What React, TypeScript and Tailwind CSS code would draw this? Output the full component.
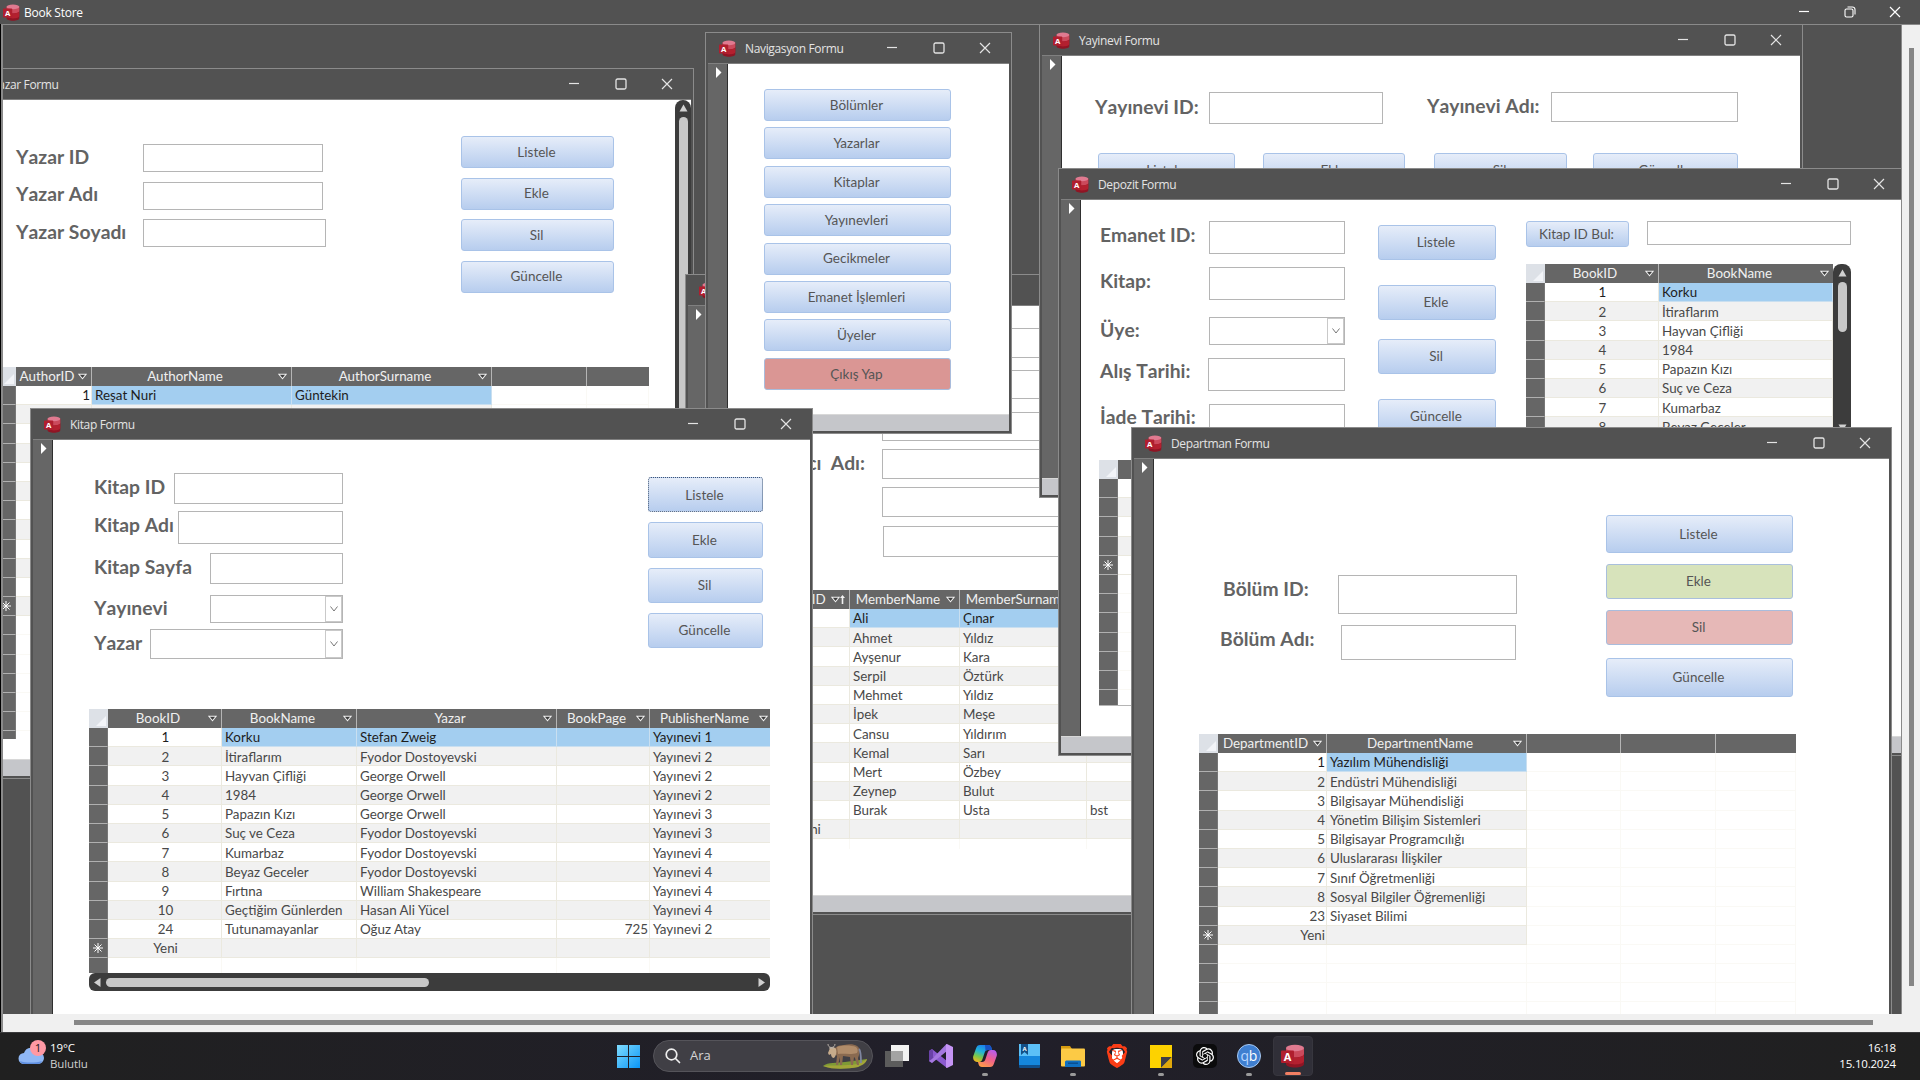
import React from "react";
import { SiBrave, SiOpenai } from "react-icons/si";

const AccessIcon = ({ size = 17 }: { size?: number }) => (
  <svg width={size} height={size} viewBox="0 0 24 24" className="shrink-0">
    <path d="M5 4v16c0 2 4 3.500 9 3.500s9-1.500 9-3.500V4z" fill="#8f1524" />
    <path d="M5 4v6c0 2 4 3.500 9 3.500s9-1.500 9-3.500V4z" fill="#cb4a5c" />
    <path d="M5 17c0 1.500 4 3.400 9 3.400s9-1.400 9-3.400v-7c0 2-4 3.400-9 3.400S5 12 5 10z" fill="#b3202f" />
    <ellipse cx="14" cy="4" rx="9" ry="3.300" fill="#e07a90" />
    <rect x="0" y="6.500" width="13" height="12.500" rx="1" fill="#b01e2e" />
    <text x="6.500" y="16.600" fill="#fff" fontSize="11" fontWeight="700" fontFamily="Open Sans, sans-serif" textAnchor="middle">A</text>
  </svg>
);

const Minimize = () => (
  <svg width="12" height="12" viewBox="0 0 12 12"><path d="M1 5.500h10" stroke="currentColor" strokeWidth="1.200" /></svg>
);
const Maximize = () => (
  <svg width="12" height="12" viewBox="0 0 12 12"><rect x="1" y="1" width="10" height="10" rx="1.500" fill="none" stroke="currentColor" strokeWidth="1.300" /></svg>
);
const Restore = () => (
  <svg width="12" height="12" viewBox="0 0 12 12" fill="none" stroke="currentColor" strokeWidth="1.100"><rect x="1" y="3" width="8" height="8" rx="1.500" /><path d="M3.500 1h5a2.500 2.500 0 0 1 2.500 2.500v5" /></svg>
);
const Close = () => (
  <svg width="12" height="12" viewBox="0 0 12 12"><path d="M1 1l10 10M11 1L1 11" stroke="currentColor" strokeWidth="1.200" /></svg>
);

function Win({ title, className, strip = true, bottomBar = true, children }: { title: string; className: string; strip?: boolean; bottomBar?: boolean; children?: React.ReactNode }) {
  return (
    <section className={`absolute flex flex-col border border-[#8b8b8b] bg-[#525252] px-[2px] pb-[2px] ${className}`}>
      <header className="flex h-[30px] shrink-0 items-center pl-[11px] pr-[18px] text-[#e4e4e4]">
        <AccessIcon />
        <span className="ml-[9px] flex-1 whitespace-nowrap pt-px font-['Open_Sans',sans-serif] text-[12px] tracking-[-0.350px]">{title}</span>
        <span className="flex gap-[34.500px]"><Minimize /><Maximize /><Close /></span>
      </header>
      <div className="flex min-h-0 flex-1 overflow-hidden border-t border-[#808080]">
        {strip && (
          <div className="w-5 shrink-0 border-r border-[#2f2f2f] bg-[#666]">
            <svg width="6" height="11" viewBox="0 0 6 11" className="ml-2 mt-[3px]"><path d="M0 0l5.500 5.500L0 11z" fill="#fff" /></svg>
          </div>
        )}
        <div className="flex min-w-0 flex-1 overflow-hidden bg-white">{children}</div>
      </div>
      {bottomBar && <div className="h-[17px] shrink-0 border-t border-[#d8d8d8] bg-[#c5c6ca]" />}
    </section>
  );
}

function Btn({ children, className = "", tone = "border-[#a9c3e8] bg-linear-to-b from-[#e6edf9] to-[#b7cdee]" }: { children: React.ReactNode; className?: string; tone?: string }) {
  return (
    <button className={`flex shrink-0 items-center justify-center rounded-[3px] border pr-[2px] font-['Lato',sans-serif] text-[13.500px] text-[#555] ${tone} ${className}`}>{children}</button>
  );
}

const Label = ({ children, className = "" }: { children: React.ReactNode; className?: string }) => (
  <label className={`whitespace-pre pb-[3px] font-['Lato',sans-serif] text-[19.300px] font-bold leading-none text-[#636363] [font-kerning:none] ${className}`}>{children}</label>
);

const Box = ({ className = "", combo = false }: { className?: string; combo?: boolean }) => (
  <div className={`flex shrink-0 justify-end border border-[#b5b5b5] bg-white ${className}`}>
    {combo && (
      <span className="flex w-[17px] items-center justify-center border border-[#c9c9c9]">
        <svg width="8" height="6" viewBox="0 0 8 6"><path d="M.5.5L4 5 7.500.5" fill="none" stroke="#777" /></svg>
      </span>
    )}
  </div>
);

const Field = ({ label, row, box, combo, labelClass = "" }: { label: string; row: string; box: string; combo?: boolean; labelClass?: string }) => (
  <div className={`flex shrink-0 items-center justify-between ${row}`}>
    <Label className={labelClass}>{label}</Label>
    <Box className={box} combo={combo} />
  </div>
);

type Col = { label?: string; w: string; align?: string; sorted?: boolean };

function Sheet({ cols, rows, dataCols, blank = 0, star = true, className = "" }: { cols: Col[]; rows: string[][]; dataCols: number; blank?: number; star?: boolean; className?: string }) {
  const all = [...rows, ...Array.from({ length: blank }, () => [] as string[])];
  return (
    <div className={`flex shrink-0 flex-col overflow-hidden font-['Lato',sans-serif] text-[13.400px] text-[#484848] ${className}`}>
      <div className="flex h-[19px] shrink-0 bg-[#666] text-[#f0f0f0]">
        <div className="flex w-[19px] shrink-0 items-end justify-end bg-[#dde1e7] p-[2px]">
          <svg width="10" height="10" viewBox="0 0 10 10"><path d="M10 0v10H0z" fill="#f2f4f8" /></svg>
        </div>
        {cols.map((c, i) => (
          <div key={i} className={`flex shrink-0 items-center border-r border-[#b5b5b5] pr-[4px] last:border-r-0 ${c.w}`}>
            <span className="flex-1 whitespace-nowrap text-center">{c.label}</span>
            {c.label && (
              <svg width="9" height="7" viewBox="0 0 10 7" className="shrink-0"><path d="M1 1h8L5 6z" fill="#3d3d3d" stroke="#f0f0f0" strokeWidth="1.200" /></svg>
            )}
            {c.sorted && (
              <svg width="5" height="9" viewBox="0 0 5 9" className="shrink-0"><path d="M2.500 0L5 3H0zM1.700 3h1.600v6H1.700z" fill="#f0f0f0" /></svg>
            )}
          </div>
        ))}
      </div>
      {all.map((r, ri) => {
        const data = ri < rows.length;
        const isStar = star && ri === rows.length - 1;
        return (
          <div key={ri} className="flex h-[19.200px] shrink-0">
            <div className="flex w-[19px] shrink-0 items-center justify-center border-b border-r border-b-[#b0b0b0] border-r-[#777] bg-[#666]">
              {isStar && (
                <svg width="10" height="10" viewBox="0 0 10 10"><path d="M5 0v10M0 5h10M1.500 1.500l7 7M8.500 1.500l-7 7" stroke="#fff" strokeWidth="1" /></svg>
              )}
            </div>
            {cols.map((c, ci) => {
              const inData = data && ci < dataCols;
              const bg = !inData ? "border-[#faf9f5]" : ri === 0 && ci > 0 ? "bg-[#a3cef0] border-[#c9dff0]" : ri % 2 ? "bg-[#f1f1f1] border-[#ebe9df]" : "bg-white border-[#ebe9df]";
              return (
                <div key={ci} className={`flex shrink-0 items-center overflow-hidden whitespace-nowrap border-b border-r pl-[3px] pr-px pt-[2px] leading-none ${ri === 0 ? "text-[#1d1d1d]" : ""} ${bg} ${c.align ?? ""} ${c.w}`}>{r[ci] ?? ""}</div>
              );
            })}
          </div>
        );
      })}
    </div>
  );
}

const books: string[][] = [
  ["1", "Korku", "Stefan Zweig", "", "Yayınevi 1"],
  ["2", "İtiraflarım", "Fyodor Dostoyevski", "", "Yayınevi 2"],
  ["3", "Hayvan Çifliği", "George Orwell", "", "Yayınevi 2"],
  ["4", "1984", "George Orwell", "", "Yayınevi 2"],
  ["5", "Papazın Kızı", "George Orwell", "", "Yayınevi 3"],
  ["6", "Suç ve Ceza", "Fyodor Dostoyevski", "", "Yayınevi 3"],
  ["7", "Kumarbaz", "Fyodor Dostoyevski", "", "Yayınevi 4"],
  ["8", "Beyaz Geceler", "Fyodor Dostoyevski", "", "Yayınevi 4"],
  ["9", "Fırtına", "William Shakespeare", "", "Yayınevi 4"],
  ["10", "Geçtiğim Günlerden", "Hasan Ali Yücel", "", "Yayınevi 4"],
  ["24", "Tutunamayanlar", "Oğuz Atay", "725", "Yayınevi 2"],
  ["Yeni"],
];
const members: string[][] = [
  ["", "Ali", "Çınar"], ["", "Ahmet", "Yıldız"], ["", "Ayşenur", "Kara"], ["", "Serpil", "Öztürk"], ["", "Mehmet", "Yıldız"], ["", "İpek", "Meşe"],
  ["", "Cansu", "Yıldırım"], ["", "Kemal", "Sarı"], ["", "Mert", "Özbey"], ["", "Zeynep", "Bulut"], ["", "Burak", "Usta", "bst"], ["Yeni"],
];
const departments: string[][] = [
  ["1", "Yazılım Mühendisliği"], ["2", "Endüstri Mühendisliği"], ["3", "Bilgisayar Mühendisliği"], ["4", "Yönetim Bilişim Sistemleri"], ["5", "Bilgisayar Programcılığı"],
  ["6", "Uluslararası İlişkiler"], ["7", "Sınıf Öğretmenliği"], ["8", "Sosyal Bilgiler Öğremenliği"], ["23", "Siyaset Bilimi"], ["Yeni"],
];
const center = "justify-center";
const right = "justify-end";

const UpArrow = () => <svg width="9" height="8" viewBox="0 0 9 8" className="shrink-0"><path d="M4.500.5L8.500 7.500H.5z" fill="#d0d0d0" /></svg>;

const AuthorWindow = () => (
  <Win title="Yazar Formu" className="-left-[51px] top-[43px] h-[711px] w-[742px]">
    <div className="flex flex-1 flex-col">
      <div className="flex h-[267px] shrink-0">
        <div className="ml-[41px] mt-[44px] flex flex-col gap-[9.500px]">
          <Field label="Yazar ID" row="w-[307px] h-[28px]" box="h-[28px] w-[180px]" />
          <Field label="Yazar Adı" row="w-[307px] h-[28px]" box="h-[28px] w-[180px]" />
          <Field label="Yazar Soyadı" row="w-[310px] h-[28px]" box="h-[28px] w-[183px]" />
        </div>
        <div className="ml-[135px] mt-[36px] flex flex-col gap-[9.500px]">
          {["Listele", "Ekle", "Sil", "Güncelle"].map((t) => <Btn key={t} className="h-[32px] w-[153px]">{t}</Btn>)}
        </div>
      </div>
      <Sheet className="ml-[22px] h-[372px] w-[652px]" dataCols={3} blank={7}
        cols={[{ label: "AuthorID", w: "w-[76px]", align: right }, { label: "AuthorName", w: "w-[200px]" }, { label: "AuthorSurname", w: "w-[200px]" }, { w: "w-[95px]" }, { w: "w-[62px]" }]}
        rows={[["1", "Reşat Nuri", "Güntekin"], ...Array.from({ length: 10 }, () => ["", "", ""]), [""]]} />
    </div>
    <div className="flex w-4 shrink-0 flex-col items-center rounded-t-lg bg-[#3c3c3c] pt-1">
      <UpArrow />
      <div className="mt-[5px] h-[500px] w-[9px] rounded-full bg-[#c8c8c8]" />
    </div>
  </Win>
);

const MemberWindow = () => (
  <Win title="Üye Formu" className="left-[682px] top-[249px] h-[641px] w-[600px]">
    <div className="flex flex-1 flex-col">
      <div className="flex h-[284px] shrink-0 flex-col pt-[22px]">
        <Box className="ml-[174px] h-[30px] w-[230px]" />
        <Box className="ml-[174px] mt-[12px] h-[29px] w-[230px]" />
        <Box className="ml-[174px] mt-[13px] h-[29px] w-[230px]" />
        <div className="mt-[8px] flex items-center">
          <div className="flex w-[174px] justify-end pr-[17px]"><Label>{"Kullanıcı  Adı:"}</Label></div>
          <Box className="h-[30px] w-[230px]" />
        </div>
        <Box className="ml-[174px] mt-[8px] h-[30px] w-[230px]" />
        <Box className="ml-[175px] mt-[9px] h-[31px] w-[229px]" />
      </div>
      <Sheet className="ml-[30px] h-[259px]" dataCols={4} blank={1}
        cols={[{ label: "MemberID", w: "w-[93px]", align: "justify-center pl-[12px]", sorted: true }, { label: "MemberName", w: "w-[110px]" }, { label: "MemberSurname", w: "w-[127px]" }, { label: "UserName", w: "w-[100px]" }]}
        rows={members} />
    </div>
  </Win>
);

const PublisherWindow = () => (
  <Win title="Yayinevi Formu" className="left-[1036px] -top-px h-[474px] w-[764px]">
    <div className="flex flex-1 flex-col">
      <div className="flex items-start pt-[36px]">
        <Field label="Yayınevi ID:" row="ml-[33px] h-[32px] w-[288px]" box="h-[32px] w-[174px]" />
        <Field label="Yayınevi Adı:" row="ml-[44px] h-[30px] w-[311px]" box="h-[30px] w-[187px]" />
      </div>
      <div className="mt-[29px] flex pl-[36px]">
        <Btn className="h-[34px] w-[137px]">Listele</Btn>
        <Btn className="ml-[28px] h-[34px] w-[142px]">Ekle</Btn>
        <Btn className="ml-[29px] h-[34px] w-[133px]">Sil</Btn>
        <Btn className="ml-[26px] h-[34px] w-[145px]">Güncelle</Btn>
      </div>
    </div>
  </Win>
);

const NavigationWindow = () => (
  <Win title="Navigasyon Formu" className="left-[702px] top-[7px] h-[402px] w-[307px]">
    <div className="flex flex-col gap-[6.400px] pl-[36px] pt-[25px]">
      {["Bölümler", "Yazarlar", "Kitaplar", "Yayınevleri", "Gecikmeler", "Emanet İşlemleri", "Üyeler"].map((t) => <Btn key={t} className="h-[32px] w-[187px]">{t}</Btn>)}
      <Btn className="h-[32px] w-[187px]" tone="border-[#a9bcdc] bg-[#da9694]">Çıkış Yap</Btn>
    </div>
  </Win>
);

const DepositWindow = () => (
  <Win title="Depozit Formu" className="left-[1055px] top-[143px] h-[588px] w-[848px]">
    <div className="flex flex-1 flex-col">
      <div className="flex h-[260px] shrink-0">
        <div className="ml-[19px] flex flex-col pt-[21px]">
          <Field label="Emanet ID:" row="h-[33px] w-[245px]" box="h-[33px] w-[136px]" labelClass="-mt-[2px]" />
          <Field label="Kitap:" row="mt-[13px] h-[33px] w-[245px]" box="h-[33px] w-[136px]" labelClass="-mt-[2px]" />
          <Field label="Üye:" row="mt-[17px] h-[28px] w-[245px]" box="h-[28px] w-[136px]" combo />
          <Field label="Alış Tarihi:" row="mt-[13px] h-[33px] w-[245px]" box="h-[33px] w-[137px]" labelClass="-mt-[5px]" />
          <Field label="İade Tarihi:" row="mt-[13px] h-[33px] w-[245px]" box="h-[33px] w-[136px]" labelClass="-mt-[5px]" />
        </div>
        <div className="ml-[33px] flex flex-col pt-[25px]">
          <Btn className="h-[35px] w-[118px]">Listele</Btn>
          <Btn className="mt-[25px] h-[35px] w-[118px]">Ekle</Btn>
          <Btn className="mt-[19px] h-[35px] w-[118px]">Sil</Btn>
          <Btn className="mt-[25px] h-[35px] w-[118px]">Güncelle</Btn>
        </div>
        <div className="ml-[30px] flex flex-col pt-[21px]">
          <div className="flex">
            <Btn className="h-[26px] w-[103px]">Kitap ID Bul:</Btn>
            <Box className="ml-[18px] h-[24px] w-[204px]" />
          </div>
          <div className="mt-[17px] flex">
            <Sheet className="h-[180px]" dataCols={2} star={false}
              cols={[{ label: "BookID", w: "w-[114px]", align: center }, { label: "BookName", w: "w-[174px]" }]}
              rows={books.slice(0, 9).map((b) => b.slice(0, 2))} />
            <div className="flex w-[18px] flex-col items-center rounded-t-lg bg-[#3c3c3c] pt-[5px]">
              <UpArrow />
              <div className="mt-[5px] h-[50px] w-[9px] rounded-full bg-[#c8c8c8]" />
              <svg width="9" height="8" viewBox="0 0 9 8" className="mt-[92px]"><path d="M.5.500h8L4.500 7.500z" fill="#d0d0d0" /></svg>
            </div>
          </div>
        </div>
      </div>
      <Sheet className="ml-[18px] h-[246px] w-[660px] border-b border-[#b5b5b5]" dataCols={2} blank={8}
        cols={[{ w: "w-[120px]" }, { w: "w-[520px]" }]}
        rows={[["", ""], ["", ""], ["", ""], ["", ""], ["", ""]]} />
    </div>
  </Win>
);

const BookWindow = () => (
  <Win title="Kitap Formu" bottomBar={false} className="left-[27px] top-[383px] h-[700px] w-[783px]">
    <div className="flex flex-1 flex-col">
      <div className="flex h-[269px] shrink-0 justify-between pl-[41px] pr-[47px]">
        <div className="flex flex-col pt-[33px]">
          <Field label="Kitap ID" row="h-[31px] w-[249px]" box="h-[31px] w-[169px]" />
          <Field label="Kitap Adı" row="mt-[7px] h-[33px] w-[249px]" box="h-[33px] w-[165px]" labelClass="-mt-[3px]" />
          <Field label="Kitap Sayfa" row="mt-[9px] h-[31px] w-[249px]" box="h-[31px] w-[133px]" />
          <Field label="Yayınevi" row="mt-[11px] h-[28px] w-[249px]" box="h-[28px] w-[133px]" combo />
          <Field label="Yazar" row="mt-[6px] h-[30px] w-[249px]" box="h-[30px] w-[193px]" combo />
        </div>
        <div className="flex flex-col gap-[10px] pt-[37px]">
          <Btn className="h-[35.300px] w-[115px]" tone="border-dotted border-[#3f5676] bg-linear-to-b from-[#e6edf9] to-[#b7cdee]">Listele</Btn>
          {["Ekle", "Sil", "Güncelle"].map((t) => <Btn key={t} className="h-[35.300px] w-[115px]">{t}</Btn>)}
        </div>
      </div>
      <Sheet className="ml-[36px] h-[264px] w-[681px]" dataCols={5} blank={1}
        cols={[{ label: "BookID", w: "w-[114px]", align: center }, { label: "BookName", w: "w-[135px]" }, { label: "Yazar", w: "w-[200px]" }, { label: "BookPage", w: "w-[93px]", align: right }, { label: "PublisherName", w: "w-[122px]" }]}
        rows={books} />
      <div className="ml-[36px] flex h-[18px] w-[681px] shrink-0 items-center rounded-l-md rounded-r-md bg-[#3c3c3c] px-[5px]">
        <svg width="7" height="9" viewBox="0 0 7 9"><path d="M6.500 0v9L0 4.500z" fill="#d0d0d0" /></svg>
        <div className="ml-[5px] h-[9px] w-[323px] rounded-full bg-[#c8c8c8]" />
        <svg width="7" height="9" viewBox="0 0 7 9" className="ml-auto"><path d="M.5 0v9L7 4.500z" fill="#d0d0d0" /></svg>
      </div>
    </div>
  </Win>
);

const DepartmentWindow = () => (
  <Win title="Departman Formu" bottomBar={false} className="left-[1128px] top-[402px] h-[700px] w-[761px]">
    <div className="flex flex-1 flex-col">
      <div className="flex h-[275px] shrink-0 justify-between pr-[96px]">
        <div className="flex flex-col pl-[66px] pt-[116px]">
          <Field label="Bölüm ID:" row="ml-[3px] h-[39px] w-[294px]" box="h-[39px] w-[179px]" labelClass="-mt-[9px]" />
          <Field label="Bölüm Adı:" row="mt-[11px] h-[35px] w-[296px]" box="h-[35px] w-[175px]" labelClass="-mt-[5px]" />
        </div>
        <div className="flex flex-col pt-[56px]">
          <Btn className="h-[38px] w-[187px]">Listele</Btn>
          <Btn className="mt-[11px] h-[35px] w-[187px]" tone="border-[#a9bfdc] bg-[#d7e3bb]">Ekle</Btn>
          <Btn className="mt-[11px] h-[35px] w-[187px]" tone="border-[#a9bcdc] bg-[#e6b8b7]">Sil</Btn>
          <Btn className="mt-[13px] h-[39px] w-[187px]">Güncelle</Btn>
        </div>
      </div>
      <Sheet className="ml-[45px] h-[290px] w-[597px]" dataCols={2} blank={5}
        cols={[{ label: "DepartmentID", w: "w-[109px]", align: right }, { label: "DepartmentName", w: "w-[200px]" }, { w: "w-[94px]" }, { w: "w-[95px]" }, { w: "w-[80px]" }]}
        rows={departments} />
    </div>
  </Win>
);

const TaskItem = ({ children, dot }: { children: React.ReactNode; dot?: boolean }) => (
  <div className="relative flex h-[46px] w-[44px] items-center justify-center">
    {children}
    {dot && <span className="absolute bottom-[3px] h-[3px] w-[6px] rounded-full bg-[#9a9a9a]" />}
  </div>
);

const Wildebeest = () => (
  <svg width="46" height="26" viewBox="0 0 46 26">
    <path d="M1 23c5-4 14-3 22-4s15-2 22-3c-1 4-5 6-9 8-10 2-25 3-35-1z" fill="#7f9a35" />
    <path d="M1 23c8-1 22 0 35-2l9-5c-1 5-5 6-9 8-10 2-25 3-35-1z" fill="#b9ae3c" opacity=".6" />
    <path d="M13 5c2-2 5-3 9-3 5-1 10-1 13 1 3 2 3 6 2 9l-1 3 1 7h-2l-2-7-1-1-1 8h-2l-1-8-7-1-1 9h-2v-8l-2 8h-2l1-9c-2-2-3-4-3-8z" fill="#8a6a50" />
    <path d="M15 4c5-2 14-2 19 0 2 2 2 4 1 6-7 2-13 0-19 1z" fill="#b08c6a" />
    <path d="M8 5c2-1 5-1 6 1 1 3 0 7-2 9-2 0-3-2-3-4l-2 1-1-2z" fill="#c6ab8b" />
    <path d="M6 1c0 2 1 3 3 3.500 2 0 4-1 4-3.500M7 5h5" stroke="#b8b0a8" strokeWidth="1" fill="none" />
    <path d="M37 6c2 2 2 8 2 14" stroke="#7f86a0" strokeWidth="1.800" fill="none" />
  </svg>
);

const Taskbar = () => (
  <footer className="flex h-[48px] shrink-0 items-center border-t border-[#3b3b3d] bg-linear-to-r from-[#202020] via-[#211f2a] to-[#202020] pb-px font-['Open_Sans',sans-serif]">
    <div className="flex w-[606px] items-center pl-[18px]">
      <svg width="30" height="28" viewBox="0 0 30 28" className="-mt-[6px]">
        <path d="M6 25a5.500 5.500 0 0 1 0-11 7.500 7.500 0 0 1 14-1 6 6 0 0 1 0 12z" fill="#8fb7f5" />
        <path d="M2 22c5 2 16 2 22 0-1 2-2 3-4 3H6c-2 0-3-1-4-3z" fill="#5f8fe0" />
        <circle cx="20" cy="9" r="8" fill="#ff99a4" />
        <text x="20" y="13" fontSize="11.500" textAnchor="middle" fill="#1a1a1a" fontFamily="Open Sans, sans-serif">1</text>
      </svg>
      <div className="ml-[2px] flex flex-col text-[11.500px] leading-[16px] tracking-[-0.100px]">
        <span className="text-white">19°C</span>
        <span className="text-[#cfcfcf]">Bulutlu</span>
      </div>
    </div>
    <TaskItem>
      <svg width="23" height="23" viewBox="0 0 23 23">
        <defs><linearGradient id="win" x1="0" y1="0" x2="1" y2="1"><stop offset="0" stopColor="#7fdcff" /><stop offset="1" stopColor="#0a95f5" /></linearGradient></defs>
        <path d="M0 0h11v11H0zM12 0h11v11H12zM0 12h11v11H0zM12 12h11v11H12z" fill="url(#win)" />
      </svg>
    </TaskItem>
    <div className="ml-[3px] mr-[2px] flex h-[32px] w-[220px] items-center rounded-full border border-[#55545a] bg-[#403f45] pl-[11px] pr-[4px]">
      <svg width="16" height="16" viewBox="0 0 16 16" fill="none" stroke="#eee" strokeWidth="1.700"><circle cx="6.500" cy="6.500" r="5.300" /><path d="M10.500 10.500l4 4" strokeLinecap="round" /></svg>
      <span className="ml-[9px] flex-1 text-[13px] text-[#d5d5d5]">Ara</span>
      <Wildebeest />
    </div>
    <TaskItem>
      <svg width="24" height="24" viewBox="0 0 24 24"><rect x="6" y="1" width="18" height="16" fill="#f2f2f2" /><rect x="0" y="7" width="18" height="16" fill="#5c5c5c" /><rect x="6" y="7" width="12" height="10" fill="#a3a3a3" /></svg>
    </TaskItem>
    <TaskItem>
      <svg width="24" height="24" viewBox="0 0 24 24">
        <path d="M0 7l3-2 15 12v7L3 12.500 0 17z" fill="#8c5bd0" />
        <path d="M0 7l3-2 1 2v10l-1 2-3-2z" fill="#6a42a8" />
        <path d="M3 19l-3-2 3-2L17 .5 18 0v7z" fill="#a578e0" />
        <path d="M18 0l6 3v18l-6 3-1-.5V.5z" fill="#c594f5" />
      </svg>
    </TaskItem>
    <TaskItem dot>
      <svg width="24" height="22" viewBox="0 0 24 22">
        <defs>
          <linearGradient id="cpa" x1=".6" y1="0" x2=".2" y2="1"><stop offset="0" stopColor="#1c7df0" /><stop offset=".4" stopColor="#22b5d8" /><stop offset=".7" stopColor="#7bc84a" /><stop offset="1" stopColor="#f4b520" /></linearGradient>
          <linearGradient id="cpb" x1=".8" y1="0" x2=".3" y2="1"><stop offset="0" stopColor="#b45cf0" /><stop offset=".5" stopColor="#f0608c" /><stop offset="1" stopColor="#ff9a4a" /></linearGradient>
        </defs>
        <path d="M7 0h8c2 0 3 1 3.500 3l.5 2h-4c-2 0-3 1-3.500 3l-2 6c-.7 2-1.500 3-3.500 3H4c-3 0-4.500-3-3.700-6L3 3.500C3.700 1 5 0 7 0z" fill="url(#cpa)" />
        <path d="M17 22H9c-2 0-3-1-3.500-3L5 17h4c2 0 3-1 3.500-3l2-6c.7-2 1.500-3 3.500-3H20c3 0 4.500 3 3.700 6L21 18.500c-.7 2.500-2 3.500-4 3.500z" fill="url(#cpb)" />
        <path d="M12 0h3c2 0 3 1 3.500 3l.5 2h-4c-1 0-2 .4-2.500 1z" fill="#1852c4" />
      </svg>
    </TaskItem>
    <TaskItem>
      <svg width="22" height="24" viewBox="0 0 22 24"><rect x="1" width="21" height="24" rx="1" fill="#0f4f8c" /><rect x="1" width="21" height="21" fill="#1587dd" /><rect x="1" width="21" height="12" fill="#5cc0f7" /><path d="M3 0h7v11L6.500 8 3 11z" fill="#134f86" /><text x="6.500" y="6.500" fontSize="6" fontWeight="700" fill="#fff" textAnchor="middle" fontFamily="Open Sans, sans-serif">A</text></svg>
    </TaskItem>
    <TaskItem dot>
      <svg width="24" height="22" viewBox="0 0 24 22"><path d="M0 1h9l2 3H0z" fill="#d59b10" /><rect y="3.500" width="24" height="18" rx="1" fill="#fcca45" /><path d="M4 22v-5c0-1 1-1.500 1.500-1.500h13c1 0 1.500.5 1.500 1.500v5z" fill="#0f6fc0" /><rect x="7" y="17.500" width="10" height="1.500" fill="#0a4f90" /></svg>
    </TaskItem>
    <TaskItem>
      <span className="relative flex h-6 w-6 items-center justify-center">
        <span className="absolute h-[15px] w-[11px] rounded-sm bg-white" />
        <SiBrave className="relative text-[#fb3d16]" size={24} />
      </span>
    </TaskItem>
    <TaskItem dot>
      <svg width="22" height="23" viewBox="0 0 22 23"><rect width="22" height="23" fill="#fdd200" /><path d="M11 23V12h11z" fill="#3f3f45" /><path d="M11 23L22 12v11z" fill="#e0a80c" /></svg>
    </TaskItem>
    <TaskItem>
      <span className="flex h-6 w-6 items-center justify-center rounded-[5px] bg-[#0b0b0c]"><SiOpenai className="text-white" size={18} /></span>
    </TaskItem>
    <TaskItem dot>
      <svg width="24" height="24" viewBox="0 0 24 24"><circle cx="12" cy="12" r="11.500" fill="#3f7fd0" stroke="#a8c8f0" /><text x="7.800" y="16.500" fontSize="14" fill="#b9d6ff" textAnchor="middle" fontFamily="Open Sans, sans-serif">q</text><text x="16" y="16.500" fontSize="14" fill="#fff" textAnchor="middle" fontFamily="Open Sans, sans-serif">b</text></svg>
    </TaskItem>
    <div className="relative ml-[2px] flex h-[40px] w-[40px] items-center justify-center rounded-[4px] border border-[#37363e] bg-[#302f38]">
      <AccessIcon size={24} />
      <span className="absolute bottom-0 h-[3px] w-[16px] rounded-full bg-[#f27f63]" />
    </div>
    <div className="ml-auto flex flex-col pr-[24px] text-right text-[11.500px] leading-[16px] tracking-[-0.200px] text-white">
      <span>16:18</span>
      <span>15.10.2024</span>
    </div>
  </footer>
);

export default function App() {
  return (
    <div className="flex h-[1080px] w-[1920px] flex-col overflow-hidden bg-[#525252]">
      <header className="flex h-[24px] shrink-0 items-center pl-[3px] pr-[19px] text-white">
        <AccessIcon />
        <span className="ml-[4px] flex-1 pt-px font-['Open_Sans',sans-serif] text-[12px] tracking-[-0.250px]">Book Store</span>
        <span className="flex gap-[33.500px]"><Minimize /><Restore /><Close /></span>
      </header>
      <div className="flex min-h-0 flex-1 border-l border-black">
        <div className="flex min-w-0 flex-1 flex-col border-l-2 border-t border-[#8a8a8a]">
          <div className="flex min-h-0 flex-1">
            <main className="relative flex-1 overflow-hidden border-r border-[#8a8a8a]">
              <AuthorWindow />
              <MemberWindow />
              <PublisherWindow />
              <NavigationWindow />
              <DepositWindow />
              <BookWindow />
              <DepartmentWindow />
            </main>
            <div className="w-[18px] shrink-0 bg-[#f0f0f0] pl-[7px] pt-[23px]">
              <div className="h-[938px] w-[5px] bg-[#868686]" />
            </div>
          </div>
          <div className="h-[18px] shrink-0 bg-[#f0f0f0] pl-[71px] pt-[6px]">
            <div className="h-[5px] w-[1799px] bg-[#868686]" />
          </div>
        </div>
      </div>
      <Taskbar />
    </div>
  );
}
